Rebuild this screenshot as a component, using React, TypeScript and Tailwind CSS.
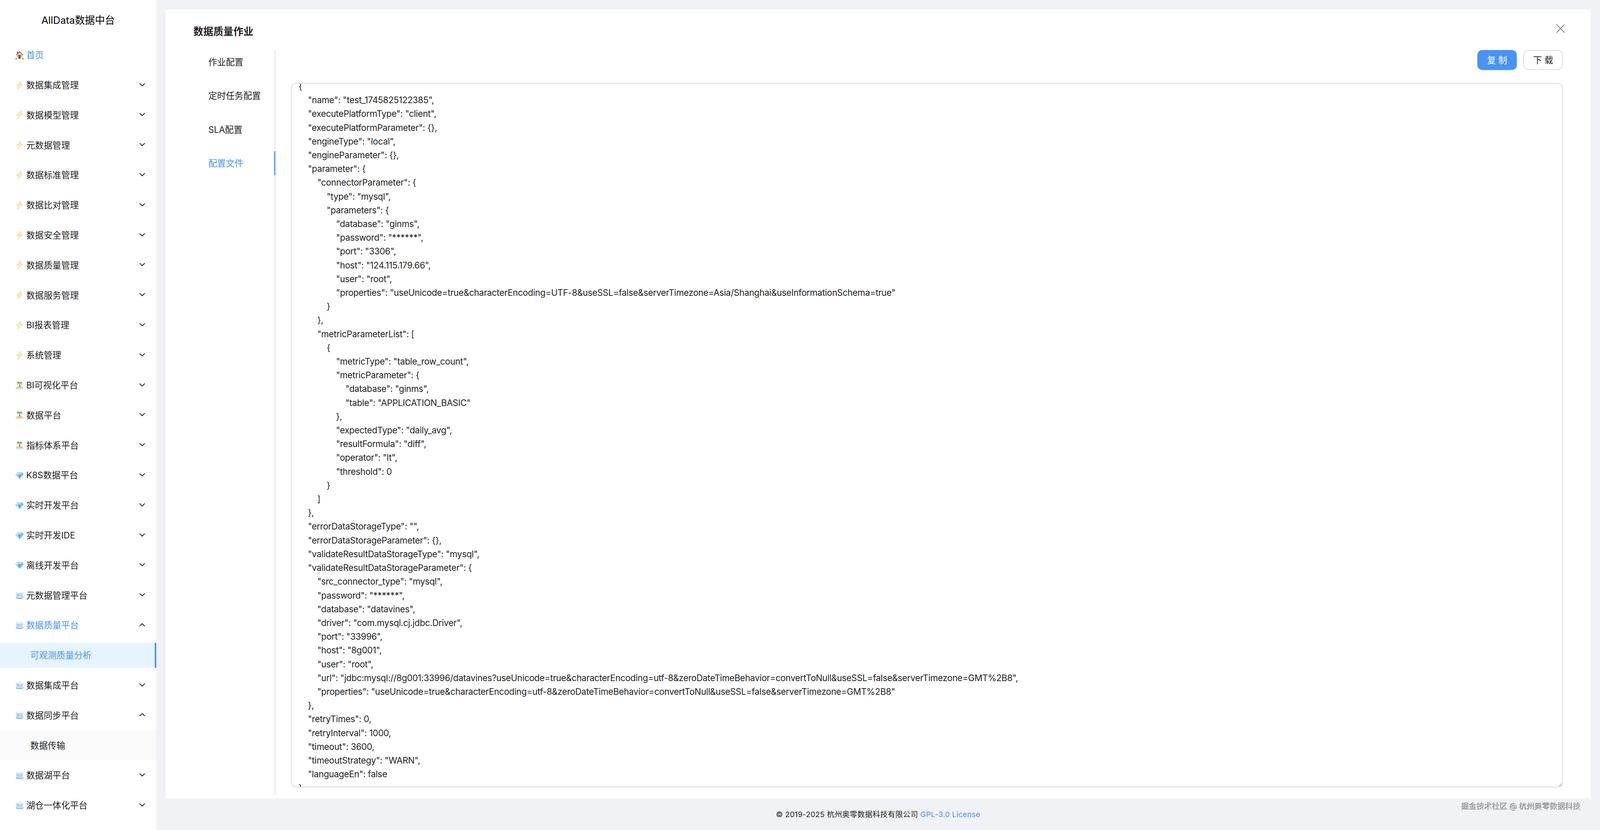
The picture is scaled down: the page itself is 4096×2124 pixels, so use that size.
import { useEffect, useRef } from "react";
import { ChevronDown, ChevronUp, X } from "lucide-react";

const CONFIG = `{
    "name": "test_1745825122385",
    "executePlatformType": "client",
    "executePlatformParameter": {},
    "engineType": "local",
    "engineParameter": {},
    "parameter": {
        "connectorParameter": {
            "type": "mysql",
            "parameters": {
                "database": "ginms",
                "password": "******",
                "port": "3306",
                "host": "124.115.179.66",
                "user": "root",
                "properties": "useUnicode=true&characterEncoding=UTF-8&useSSL=false&serverTimezone=Asia/Shanghai&useInformationSchema=true"
            }
        },
        "metricParameterList": [
            {
                "metricType": "table_row_count",
                "metricParameter": {
                    "database": "ginms",
                    "table": "APPLICATION_BASIC"
                },
                "expectedType": "daily_avg",
                "resultFormula": "diff",
                "operator": "lt",
                "threshold": 0
            }
        ]
    },
    "errorDataStorageType": "",
    "errorDataStorageParameter": {},
    "validateResultDataStorageType": "mysql",
    "validateResultDataStorageParameter": {
        "src_connector_type": "mysql",
        "password": "******",
        "database": "datavines",
        "driver": "com.mysql.cj.jdbc.Driver",
        "port": "33996",
        "host": "8g001",
        "user": "root",
        "url": "jdbc:mysql://8g001:33996/datavines?useUnicode=true&characterEncoding=utf-8&zeroDateTimeBehavior=convertToNull&useSSL=false&serverTimezone=GMT%2B8",
        "properties": "useUnicode=true&characterEncoding=utf-8&zeroDateTimeBehavior=convertToNull&useSSL=false&serverTimezone=GMT%2B8"
    },
    "retryTimes": 0,
    "retryInterval": 1000,
    "timeout": 3600,
    "timeoutStrategy": "WARN",
    "languageEn": false
}`;

type IconName = "house" | "bolt" | "island" | "gem" | "ice";

function HouseIcon() {
  return (
    <svg width="22" height="22" viewBox="0 0 25 25" className="-mx-[1px] shrink-0">
      <rect x="5" y="2" width="3.4" height="6" fill="#8a4a3a" />
      <path d="M4 11 L12.5 4 L21 11 V23 H4 Z" fill="#f2dcb4" />
      <path d="M1.5 12 L12.5 1.5 L23.5 12 L21.5 12.5 L12.5 4.5 L3.5 12.5 Z" fill="#a8443a" />
      <rect x="9.5" y="12" width="6" height="11" fill="#7c4a32" />
      <rect x="5.5" y="12" width="4.5" height="4.5" fill="#5e9ec4" />
      <rect x="15.5" y="12" width="4.5" height="4.5" fill="#7fb4d4" />
      <ellipse cx="2.5" cy="23" rx="2.5" ry="1.6" fill="#5a9a3c" />
      <ellipse cx="22.5" cy="23" rx="2.5" ry="1.6" fill="#5a9a3c" />
    </svg>
  );
}

function BoltIcon() {
  return (
    <svg width="22" height="22" viewBox="0 0 25 25" className="-mx-[1px] shrink-0">
      <path
        d="M16.5 1 L3.5 13.5 H11 L7 24.5 L21.5 10 H14 L18 3 Z"
        fill="#fdf0b8"
        stroke="#f3b95f"
        strokeWidth="1"
        strokeLinejoin="round"
      />
    </svg>
  );
}

function IslandIcon() {
  return (
    <svg width="22" height="22" viewBox="0 0 25 25" className="-mx-[1px] shrink-0">
      <ellipse cx="12.5" cy="21.2" rx="12" ry="3.6" fill="#c6e9f0" />
      <path d="M2 19.4 C5 14.4 20 14.4 23 19.4 C18 22.4 7 22.4 2 19.4 Z" fill="#f2c27c" />
      <path d="M11.6 5 C12.8 9 12.6 13 11.4 16.6 H14.4 C15 12 14.6 8 13.4 5 Z" fill="#80603c" />
      <path
        d="M13 5 C10 1.4 5 1.6 3.6 6.6 C5.8 5.2 8 5 9.4 6 C7.2 7 5.8 9.6 6.2 12 C8 8.6 10.4 6.4 13 5 Z"
        fill="#4f9a44"
      />
      <path
        d="M13 5 C15 1.4 20 1.4 22 6.6 C20 5.2 18.2 5 17 5.6 C19.4 7 20.2 9.6 19.6 12 C18 8.4 15.6 6 13 5 Z"
        fill="#62ab4c"
      />
    </svg>
  );
}

function GemIcon() {
  return (
    <svg width="22" height="22" viewBox="0 0 25 25" className="-mx-[1px] shrink-0">
      <path d="M6 3.5 H19 L25 10.5 L12.5 23.5 L0 10.5 Z" fill="#8cc2f2" />
      <path d="M6 3.5 H19 L17 10.5 H8 Z" fill="#b4dcf9" />
      <path d="M0 10.5 L6 3.5 L8 10.5 Z" fill="#d2ecfc" />
      <path d="M25 10.5 L19 3.5 L17 10.5 Z" fill="#79b4ea" />
      <path d="M8 10.5 H17 L12.5 23.5 Z" fill="#5f9fe4" />
      <path d="M0 10.5 H8 L12.5 23.5 Z" fill="#a8d4f6" />
    </svg>
  );
}

function IceIcon() {
  return (
    <svg width="22" height="22" viewBox="0 0 25 25" className="-mx-[1px] shrink-0">
      <path d="M2 4.5 L5 2.5 H20 L23.5 4.5 V20.5 L20 23 H5 L2 20.5 Z" fill="#cfe6f5" />
      <path d="M2 4.5 L5 2.5 H20 L23.5 4.5 L20 6.5 H5 Z" fill="#e8f4fb" />
      <rect x="5" y="8.5" width="6.5" height="8" fill="#a6cde8" />
      <rect x="14" y="8.5" width="6.5" height="8" fill="#b2d6ed" />
      <path d="M2 18 L6 20 H20 L23.5 18 V20.5 L20 23 H5 L2 20.5 Z" fill="#8fb9dc" />
    </svg>
  );
}

function MenuIcon({ name }: { name: IconName }) {
  if (name === "house") return <HouseIcon />;
  if (name === "bolt") return <BoltIcon />;
  if (name === "island") return <IslandIcon />;
  if (name === "gem") return <GemIcon />;
  return <IceIcon />;
}

const menu: { label: string; icon: IconName; open?: boolean; active?: boolean }[] = [
  { label: "数据集成管理", icon: "bolt" },
  { label: "数据模型管理", icon: "bolt" },
  { label: "元数据管理", icon: "bolt" },
  { label: "数据标准管理", icon: "bolt" },
  { label: "数据比对管理", icon: "bolt" },
  { label: "数据安全管理", icon: "bolt" },
  { label: "数据质量管理", icon: "bolt" },
  { label: "数据服务管理", icon: "bolt" },
  { label: "BI报表管理", icon: "bolt" },
  { label: "系统管理", icon: "bolt" },
  { label: "BI可视化平台", icon: "island" },
  { label: "数据平台", icon: "island" },
  { label: "指标体系平台", icon: "island" },
  { label: "K8S数据平台", icon: "gem" },
  { label: "实时开发平台", icon: "gem" },
  { label: "实时开发IDE", icon: "gem" },
  { label: "离线开发平台", icon: "gem" },
  { label: "元数据管理平台", icon: "ice" },
  { label: "数据质量平台", icon: "ice", open: true, active: true },
];

const menuAfter: { label: string; icon: IconName; open?: boolean }[] = [
  { label: "数据集成平台", icon: "ice" },
  { label: "数据同步平台", icon: "ice", open: true },
];

const menuLast: { label: string; icon: IconName }[] = [
  { label: "数据湖平台", icon: "ice" },
  { label: "湖仓一体化平台", icon: "ice" },
];

function MenuRow({
  label,
  icon,
  open,
  active,
}: {
  label: string;
  icon: IconName;
  open?: boolean;
  active?: boolean;
}) {
  return (
    <div className={`flex h-[76.8px] shrink-0 items-center pl-[40px] pr-[24.4px] ${active ? "text-[#4a94f2]" : "text-[#1f1f1f]"}`}>
      <MenuIcon name={icon} />
      <span className="ml-[7.2px] flex-1">{label}</span>
      {open ? (
        <ChevronUp size={24} strokeWidth={2} className="-translate-y-[1px] text-[#1f1f1f]" />
      ) : (
        <ChevronDown size={24} strokeWidth={2} className="-translate-y-[1px] text-[#1f1f1f]" />
      )}
    </div>
  );
}

const tabs = ["作业配置", "定时任务配置", "SLA配置", "配置文件"];

export default function App() {
  const editorRef = useRef<HTMLTextAreaElement>(null);

  useEffect(() => {
    if (editorRef.current) editorRef.current.scrollTop = 17;
  }, []);

  return (
    <div className="relative flex h-screen w-full overflow-hidden bg-[#f0f2f5] font-[Inter,'Noto_Sans_CJK_SC',sans-serif] text-[22.4px] leading-[35.2px] text-[#1f1f1f]">
      <aside className="flex w-[400px] shrink-0 flex-col bg-white">
        <div className="flex h-[102.4px] shrink-0 items-center justify-center text-[25.6px] text-black">
          AllData数据中台
        </div>
        <div className="flex h-[76.8px] shrink-0 items-center pl-[40px] text-[#4a94f2]">
          <MenuIcon name="house" />
          <span className="ml-[7.2px]">首页</span>
        </div>
        {menu.map((item) => (
          <MenuRow key={item.label} {...item} />
        ))}
        <div className="flex h-[76.8px] shrink-0 items-center">
          <div className="flex h-[64px] w-full items-center border-r-[4.8px] border-[#4a8ff5] bg-[#e6f4ff] pl-[77.6px] text-[#4a94f2]">
            可观测质量分析
          </div>
        </div>
        {menuAfter.map((item) => (
          <MenuRow key={item.label} {...item} />
        ))}
        <div className="flex h-[76.8px] shrink-0 items-center bg-[#fafafa] pl-[77.6px]">数据传输</div>
        {menuLast.map((item) => (
          <MenuRow key={item.label} {...item} />
        ))}
      </aside>

      <main className="flex min-w-0 flex-1 flex-col px-[24px] pt-[24px]">
        <section className="relative flex h-[2019px] shrink-0 flex-col rounded-[4px] bg-white pb-[9px] pl-[71px] pr-[71px]">
          <button className="absolute right-[57px] top-[29px] text-[#8c8c8c]">
            <X size={40} strokeWidth={1.4} />
          </button>
          <h2 className="flex h-[104px] shrink-0 items-start pt-[37px] text-[25.6px] leading-[40px] font-semibold">
            数据质量作业
          </h2>
          <div className="flex min-h-0 flex-1">
            <nav className="flex w-[210px] shrink-0 flex-col gap-[25.6px] border-r-2 border-[#e2e2e2]">
              {tabs.map((tab, i) => (
                <div
                  key={tab}
                  className={`-mr-[2px] flex h-[60.8px] items-center pl-[38.4px] ${
                    i === 3 ? "border-r-[3px] border-[#4a8ff5] text-[#4a94f2]" : ""
                  }`}
                >
                  {tab}
                </div>
              ))}
            </nav>
            <div className="flex min-w-0 flex-1 flex-col pb-[19px] pl-[40px]">
              <div className="flex shrink-0 justify-end gap-[17px]">
                <button className="h-[51.2px] w-[101px] rounded-[12.8px] bg-[#4893f5] text-white shadow-[0_3px_0_rgba(5,145,255,0.1)]">
                  复 制
                </button>
                <button className="h-[51.2px] w-[101px] rounded-[12.8px] border-2 border-[#dcdcdc] bg-white">
                  下 载
                </button>
              </div>
              <textarea
                ref={editorRef}
                readOnly
                value={CONFIG}
                wrap="off"
                className="mt-[32.8px] min-h-0 w-full flex-1 resize rounded-[12.8px] border-2 border-[#dcdcdc] bg-white px-[17.2px] py-[6px] tracking-[-0.3px] outline-none [scrollbar-width:none]"
              />
            </div>
          </div>
        </section>
        <footer className="flex flex-1 items-center justify-center pt-[2px] text-[19.2px] tracking-[0.27px]">
          <span>
            © 2019-2025 杭州奥零数据科技有限公司 <span className="text-[#4a90f0]">GPL-3.0 License</span>
          </span>
        </footer>
      </main>

      <div className="absolute right-[49px] top-[2049px] text-[19.7px] leading-[30px] text-[#c4c4c4] [text-shadow:-1px_-1px_0_#6a6a6a]">
        掘金技术社区 @ 杭州奥零数据科技
      </div>
    </div>
  );
}
